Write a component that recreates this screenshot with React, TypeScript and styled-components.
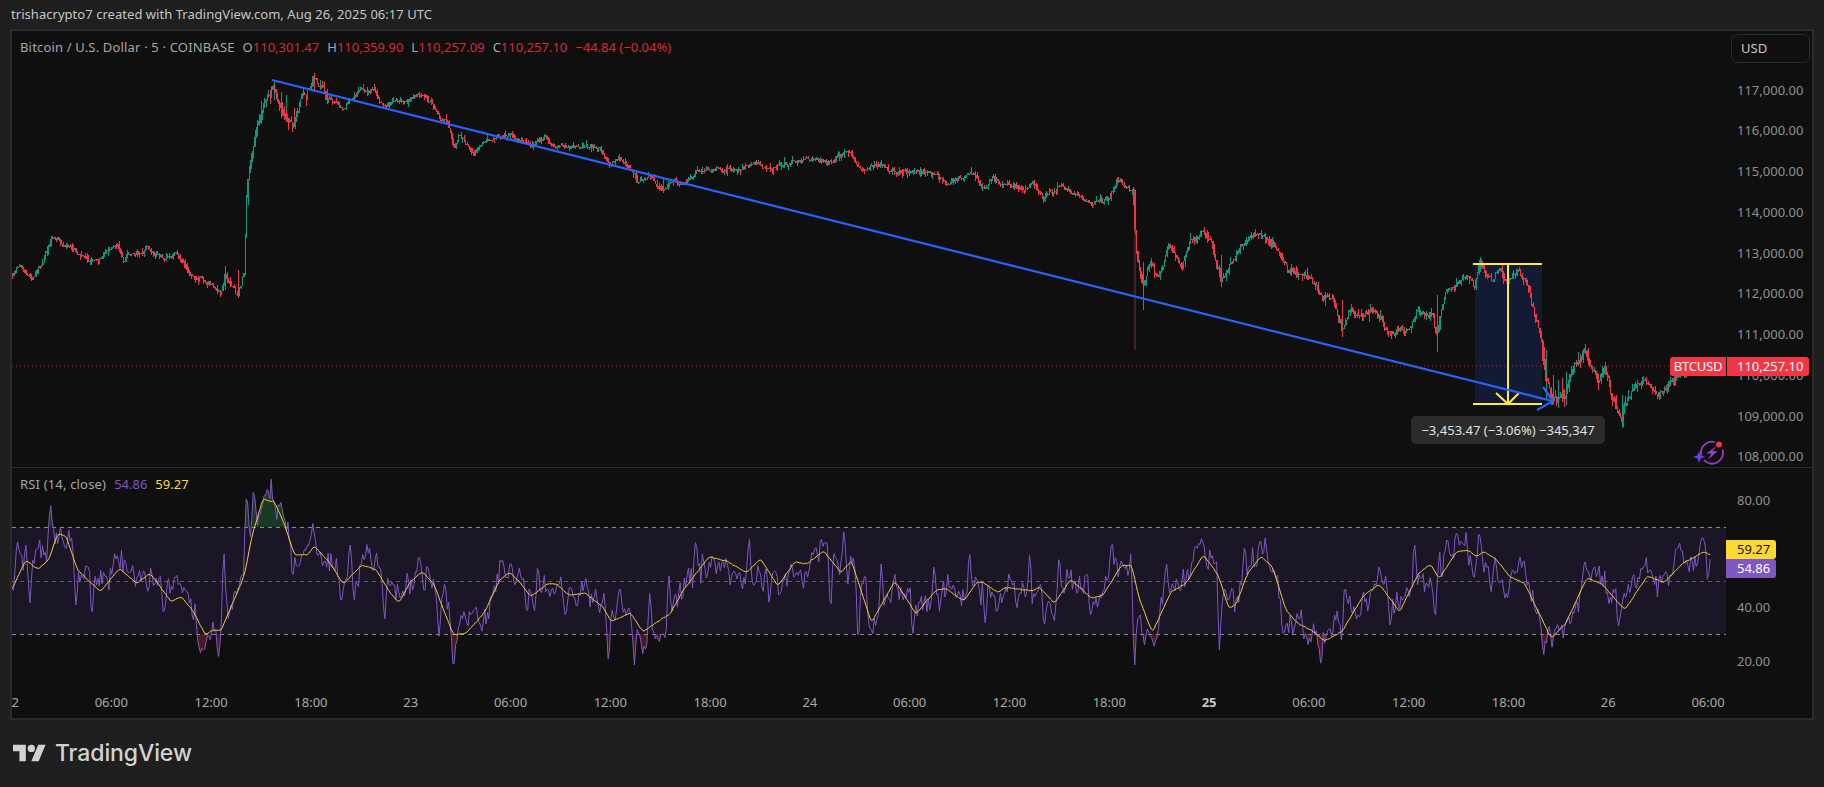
import React from "react";
import styled, { createGlobalStyle } from "styled-components";

type Pt = [number, number];

const rng = (seed: number) => () => {
  seed |= 0;
  seed = (seed + 0x6d2b79f5) | 0;
  let t = Math.imul(seed ^ (seed >>> 15), 1 | seed);
  t = (t + Math.imul(t ^ (t >>> 7), 61 | t)) ^ t;
  return ((t ^ (t >>> 14)) >>> 0) / 4294967296;
};

const interp = (pts: Pt[], x: number) => {
  if (x <= pts[0][0]) return pts[0][1];
  for (let i = 1; i < pts.length; i++) {
    if (x <= pts[i][0]) {
      const [x0, y0] = pts[i - 1];
      const [x1, y1] = pts[i];
      return y0 + ((y1 - y0) * (x - x0)) / (x1 - x0 || 1);
    }
  }
  return pts[pts.length - 1][1];
};

const PRICE: Pt[] = [
  [11, 275], [20, 265], [32, 280], [43, 262], [53, 236], [75, 250], [95, 263], [118, 243], [123, 259], [149, 246],
  [166, 261], [177, 253], [189, 273], [210, 283], [221, 296], [225, 272], [238, 295], [244, 270], [247, 190], [255, 135],
  [267, 95], [274, 90], [281, 112], [294, 125], [301, 99], [314, 78], [327, 97], [343, 107], [356, 91], [373, 90],
  [383, 107], [408, 97], [420, 94], [430, 100], [439, 118], [448, 124], [455, 150], [459, 134], [474, 153], [491, 137],
  [505, 134], [531, 145], [545, 139], [565, 147], [577, 145], [600, 150], [611, 164], [620, 156], [634, 172], [637, 181],
  [649, 175], [663, 190], [672, 179], [683, 185], [695, 171], [729, 170], [758, 163], [772, 171], [781, 164], [809, 159],
  [832, 163], [847, 150], [861, 172], [878, 164], [900, 172], [935, 173], [947, 182], [971, 174], [985, 189], [991, 179],
  [1024, 188], [1033, 183], [1044, 199], [1062, 183], [1077, 196], [1092, 202], [1109, 199], [1118, 182], [1133, 190], [1135, 228],
  [1137, 256], [1143, 285], [1150, 262], [1159, 277], [1168, 245], [1183, 267], [1189, 240], [1202, 231], [1212, 240], [1221, 280],
  [1236, 255], [1248, 236], [1259, 233], [1274, 247], [1283, 264], [1312, 281], [1324, 299], [1333, 296], [1342, 330], [1351, 309],
  [1362, 320], [1374, 307], [1389, 335], [1410, 329], [1416, 312], [1433, 315], [1437, 335], [1445, 295], [1457, 285], [1466, 277],
  [1475, 287], [1480, 263], [1492, 282], [1499, 267], [1507, 281], [1516, 273], [1525, 280], [1533, 309], [1539, 332], [1545, 372],
  [1551, 396], [1566, 396], [1572, 369], [1586, 354], [1598, 382], [1605, 368], [1610, 392], [1622, 418], [1631, 391], [1644, 379],
  [1660, 395], [1669, 381], [1687, 375],
];

const EXTRA_WICKS: [number, number, number, boolean][] = [
  [1143, 262, 310, false], [1221, 255, 287, false], [1437, 295, 352, true], [1342, 300, 337, false],
  [1566, 372, 405, true], [1622, 395, 428, true], [1546, 350, 400, true], [1480, 258, 272, true],
  [274, 80, 100, true], [314, 73, 92, false], [225, 266, 290, false], [238, 270, 298, false],
  [1135, 190, 232, false], [663, 178, 193, true], [1553, 375, 400, false], [1558, 380, 402, true],
  [281, 92, 118, false], [286, 95, 122, true], [294, 108, 127, false], [1562, 378, 402, false],
];

const volatility = (x: number) => {
  if (x > 1540 && x < 1640) return 2;
  if (x > 247 && x < 330) return 1.9;
  if (x > 1135) return 1.45;
  return 1.1;
};

const buildCandles = () => {
  const r = rng(77);
  const step = 1.3862;
  const paths = { upWick: "", downWick: "", upBody: "", downBody: "" };
  let prev = PRICE[0][1];
  let ar = 0;
  for (let x = 11; x < 1688; x += step) {
    const v = volatility(x);
    ar = ar * 0.6 + (r() - 0.5) * 3.8 * v;
    const close = interp(PRICE, x) + ar + (r() - 0.5) * 2.6 * v;
    const open = prev;
    const hi = Math.min(open, close);
    const lo = Math.max(open, close);
    const top = hi - r() * r() * 5 * v;
    const bottom = lo + r() * r() * 5 * v;
    const wick = `M${x.toFixed(1)} ${top.toFixed(1)}V${bottom.toFixed(1)}`;
    const body = `M${x.toFixed(1)} ${hi.toFixed(1)}V${Math.max(lo, hi + 1).toFixed(1)}`;
    if (close <= open) {
      paths.upWick += wick;
      paths.upBody += body;
    } else {
      paths.downWick += wick;
      paths.downBody += body;
    }
    prev = close;
  }
  EXTRA_WICKS.forEach(([x, a, b, isUp]) => {
    const seg = `M${x} ${a}V${b}`;
    if (isUp) paths.upWick += seg;
    else paths.downWick += seg;
  });
  return paths;
};

const CANDLES = buildCandles();

const zx3 = (zx: number) => zx / 1.742;
const zx4 = (zx: number) => 900 + zx / 1.697;
const zy = (v: number) => 460 + v / 3;

const YELLOW_LEFT: Pt[] = [
  [20, 390], [45, 300], [65, 328], [85, 300], [100, 222], [115, 228], [135, 330], [175, 395], [208, 325], [238, 370],
  [262, 340], [298, 425], [315, 410], [335, 450], [358, 525], [370, 510], [385, 512], [410, 410], [425, 350], [440, 220],
  [458, 118], [478, 125], [495, 190], [513, 285], [535, 285], [548, 258], [575, 310], [598, 372], [630, 315], [655, 328],
  [680, 400], [695, 428], [715, 365], [735, 335], [755, 370], [790, 525], [812, 520], [845, 455], [870, 360], [888, 337],
  [905, 365], [925, 410], [955, 370], [970, 372], [990, 405], [1020, 400], [1050, 440], [1065, 485], [1098, 458], [1120, 515],
  [1150, 480], [1168, 460], [1190, 392], [1235, 290], [1265, 303], [1300, 338], [1325, 297], [1355, 378], [1385, 305], [1405, 312],
  [1435, 273], [1465, 338], [1483, 302], [1518, 487], [1558, 365],
];
const YELLOW_RIGHT: Pt[] = [
  [0, 385], [27, 462], [60, 392], [78, 385], [108, 423], [130, 368], [140, 366], [165, 397], [180, 383], [225, 392],
  [237, 382], [262, 430], [290, 358], [325, 415], [345, 405], [375, 318], [393, 315], [405, 410], [428, 518], [460, 395],
  [485, 370], [515, 285], [540, 345], [558, 445], [570, 435], [590, 340], [612, 290], [632, 320], [655, 450], [675, 490],
  [700, 512], [720, 543], [750, 515], [785, 410], [813, 372], [848, 455], [880, 340], [900, 313], [915, 355], [945, 275],
  [965, 272], [978, 290], [990, 275], [1010, 295], [1035, 350], [1060, 370], [1105, 535], [1130, 490], [1165, 355], [1190, 370],
  [1230, 450], [1268, 348], [1297, 368], [1328, 310], [1365, 275], [1377, 288],
];
const YELLOW: Pt[] = [
  ...YELLOW_LEFT.map(([a, b]): Pt => [zx3(a), zy(b)]),
  ...YELLOW_RIGHT.map(([a, b]): Pt => [zx4(a), zy(b)]),
];

const SPIKES: Pt[] = [
  ...([
    [30, 245], [52, 430], [88, 135], [132, 435], [160, 465], [200, 280], [285, 465], [355, 570], [381, 590], [390, 280],
    [430, 100], [442, 90], [462, 105], [510, 350], [545, 190], [595, 420], [610, 255], [670, 480], [730, 288], [765, 530],
    [790, 625], [808, 455], [875, 300], [918, 460], [937, 315], [985, 465], [1060, 605], [1080, 380], [1105, 615], [1132, 400],
    [1148, 545], [1165, 345], [1212, 245], [1272, 375], [1305, 235], [1340, 430], [1430, 235], [1447, 445], [1470, 215], [1495, 545],
    [1535, 312],
  ] as Pt[]).map(([a, b]): Pt => [zx3(a), zy(b)]),
  ...([
    [22, 520], [58, 318], [118, 280], [145, 490], [220, 285], [245, 495], [270, 290], [323, 465], [360, 250], [398, 620],
    [415, 555], [452, 310], [507, 250], [542, 570], [585, 260], [610, 245], [650, 520], [714, 610], [750, 555], [755, 380],
    [832, 500], [873, 250], [908, 478], [928, 240], [983, 218], [1003, 395], [1040, 330], [1092, 585], [1162, 298], [1220, 500],
    [1262, 320], [1318, 265], [1362, 235], [1371, 372], [1377, 322],
  ] as Pt[]).map(([a, b]): Pt => [zx4(a), zy(b)]),
];

const buildRsi = () => {
  const r = rng(2024);
  const step = 1.3862;
  const xs: number[] = [];
  for (let x = 12; x <= 1711; x += step) xs.push(x);
  const raw = xs.map((x) => interp(YELLOW, x));
  const slow = raw.map((_, i) => {
    let s = 0;
    let n = 0;
    for (let k = -1; k <= 1; k++) {
      if (raw[i + k] !== undefined) {
        s += raw[i + k];
        n++;
      }
    }
    return s / n + (r() - 0.5) * 0.9;
  });
  let ar = 0;
  const fast = xs.map((x, i) => {
    ar = ar * 0.78 + (r() - 0.5) * 20;
    let y = slow[i] + Math.max(-28, Math.min(28, ar + (r() - 0.5) * 18));
    SPIKES.forEach(([sx, sy]) => {
      const w = Math.exp(-(((x - sx) / 2) ** 2));
      y += w * (sy - y);
    });
    return y;
  });
  const toLine = (ys: number[]) =>
    ys.map((y, i) => `${i ? "L" : "M"}${xs[i].toFixed(1)} ${y.toFixed(1)}`).join("");
  return {
    slow: toLine(slow),
    fast: toLine(fast),
    high: `${toLine(fast)}L${xs[xs.length - 1].toFixed(1)} 527L${xs[0].toFixed(1)} 527Z`,
    low: `${toLine(fast)}L${xs[xs.length - 1].toFixed(1)} 634L${xs[0].toFixed(1)} 634Z`,
  };
};

const RSI = buildRsi();

const GlobalStyle = createGlobalStyle`
  html, body { margin: 0; padding: 0; background: #1f1f1f; overflow: hidden; }
  #root { width: 1824px; height: 787px; }
`;

const Page = styled.div`
  width: 1824px;
  height: 787px;
  background: #1f1f1f;
  font-family: "Noto Sans", "Liberation Sans", sans-serif;
  font-size: 13px;
  display: flex;
  flex-direction: column;
`;

const Header = styled.div`
  height: 29px;
  padding: 0 0 2px 11px;
  box-sizing: border-box;
  display: flex;
  align-items: center;
  color: #c4c4c4;
  letter-spacing: 0.04px;
  white-space: nowrap;
`;

const Card = styled.div`
  margin-left: 10px;
  width: 1804px;
  height: 691px;
  box-sizing: border-box;
  border: 2px solid #2a2a2a;
  background: #0f0f0f;
  display: grid;
  grid-template-columns: 1714px 86px;
  grid-template-rows: 436px 1px 207px 43px;
`;

const Pane = styled.div`
  position: relative;
  overflow: hidden;
  min-width: 0;
`;

const ChartSvg = styled.svg`
  display: block;
  width: 1714px;
  height: 100%;
`;

const Rule = styled.div`
  grid-column: 1 / 3;
  background: #2a2a2a;
`;

const Legend = styled.div`
  position: absolute;
  left: 8px;
  top: 7px;
  display: flex;
  gap: 8px;
  color: #a6a6a6;
  white-space: nowrap;
  line-height: 18px;
`;

const LegendTitle = styled.span`
  letter-spacing: 0.17px;
`;

const Reading = styled.span<{ $color: string }>`
  color: ${(p) => p.$color};
`;

const PriceAxis = styled.div`
  position: relative;
  padding: 38.6px 0 0 11px;
  color: #8f8f8f;
`;

const RsiAxis = styled.div`
  position: relative;
  padding: 6px 0 0 11px;
  color: #8f8f8f;
`;

const Tick = styled.div<{ $h: number }>`
  height: ${(p) => p.$h}px;
  line-height: ${(p) => p.$h}px;
`;

const UsdButton = styled.div`
  position: absolute;
  left: 5px;
  top: 3px;
  width: 79px;
  height: 29px;
  box-sizing: border-box;
  border: 1px solid #2a2a2a;
  border-radius: 6px;
  padding-left: 9px;
  line-height: 27px;
  color: #c8c8c8;
  background: #0f0f0f;
`;

const LastSymbol = styled.div`
  position: absolute;
  right: 0;
  top: 326px;
  width: 56px;
  height: 19px;
  border-radius: 3px 0 0 3px;
  background: #f23645;
  color: #fff;
  line-height: 19px;
  text-align: center;
  letter-spacing: -0.2px;
`;

const LastPrice = styled.div`
  position: absolute;
  left: 1px;
  top: 326px;
  width: 82px;
  height: 19px;
  border-radius: 0 3px 3px 0;
  background: #f23645;
  color: #fff;
  line-height: 19px;
  padding-left: 10px;
  box-sizing: border-box;
`;

const SeriesTag = styled.div<{ $bg: string; $fg: string; $top: number; $h: number }>`
  position: absolute;
  left: 0;
  top: ${(p) => p.$top}px;
  width: 50px;
  height: ${(p) => p.$h}px;
  box-sizing: border-box;
  padding-left: 11px;
  line-height: ${(p) => p.$h}px;
  background: ${(p) => p.$bg};
  color: ${(p) => p.$fg};
  border-radius: 0 3px 3px 0;
`;

const Measure = styled.div`
  position: absolute;
  left: 1399px;
  top: 385px;
  width: 194px;
  height: 28px;
  border-radius: 5px;
  background: #2b2b2b;
  color: #e0e0e0;
  line-height: 28px;
  text-align: center;
  white-space: nowrap;
`;

const TimeAxis = styled.div`
  overflow: hidden;
  color: #a9a9a9;
`;

const TimeRow = styled.div`
  display: grid;
  grid-template-columns: repeat(18, 99.8px);
  margin-left: -50.4px;
  height: 100%;
  align-items: start;
  padding-top: 18px;
`;

const TimeLabel = styled.span<{ $strong?: boolean }>`
  text-align: center;
  line-height: 18px;
  font-weight: ${(p) => (p.$strong ? 700 : 400)};
  color: ${(p) => (p.$strong ? "#c8c8c8" : "inherit")};
`;

const Corner = styled.div``;

const Footer = styled.div`
  flex: 1;
  display: flex;
  align-items: center;
  gap: 9px;
  padding: 0 0 1px 13px;
`;

const LogoMark = styled.svg`
  width: 33px;
  height: 18px;
  fill: #d2d2d2;
`;

const Wordmark = styled.span`
  font-family: Inter, "Noto Sans", sans-serif;
  font-size: 23px;
  font-weight: 500;
  letter-spacing: -0.1px;
  color: #d2d2d2;
`;

const PRICE_TICKS = ["117,000.00", "116,000.00", "115,000.00", "114,000.00", "113,000.00", "112,000.00", "111,000.00", "110,000.00", "109,000.00", "108,000.00"];
const RSI_TICKS = ["80.00", "", "40.00", "20.00"];
const TIMES = ["22", "06:00", "12:00", "18:00", "23", "06:00", "12:00", "18:00", "24", "06:00", "12:00", "18:00", "25", "06:00", "12:00", "18:00", "26", "06:00"];

const OHLC: [string, string][] = [
  ["O", "110,301.47"],
  ["H", "110,359.90"],
  ["L", "110,257.09"],
  ["C", "110,257.10"],
];

const RED = "#d42a38";

const BoostBadge = () => (
  <g fill="none">
    <path d="M1701.5 455.5A11 11 0 0 1 1715 442M1722.6 449.5A11 11 0 0 1 1704 460.2" stroke="#9c3cc4" strokeWidth="1.8" />
    <path d="M1717 445.5L1706.5 453.5H1711.5L1707.5 460L1717.5 451.2H1712.5Z" fill="#a23ccb" />
    <path d="M1699 451L1700.6 455.4L1705.2 457L1700.6 458.6L1699 463L1697.4 458.6L1692.8 457L1697.4 455.4Z" fill="#6d3ff0" />
    <circle cx="1719" cy="444.5" r="3" fill="#f23645" />
  </g>
);

const MainChart = () => (
  <ChartSvg viewBox="12 31 1714 436" preserveAspectRatio="none">
    <rect x="1475" y="263" width="67" height="141" fill="#131b34" />
    <line x1="12" x2="1670" y1="366" y2="366" stroke="#f23645" strokeWidth="1" strokeDasharray="1 3" opacity="0.65" />
    <g fill="none" shapeRendering="crispEdges">
      <path d={CANDLES.upWick} stroke="#089981" strokeWidth="1" />
      <path d={CANDLES.downWick} stroke="#f23645" strokeWidth="1" />
      <path d={CANDLES.upBody} stroke="#089981" strokeWidth="1.5" />
      <path d={CANDLES.downBody} stroke="#f23645" strokeWidth="1.5" />
    </g>
    <path d="M1135 228V350" stroke="#6b3a40" strokeWidth="1" fill="none" />
    <path d="M1473 264H1542M1473 404H1542M1508 264V404" stroke="#ffeb3b" strokeWidth="2" fill="none" />
    <path d="M1496 393L1508 404L1519 393" stroke="#ffeb3b" strokeWidth="2" fill="none" />
    <path d="M272 80L1552 401" stroke="#2962ff" strokeWidth="2.2" fill="none" />
    <path d="M1543 387L1553 401L1537 410" stroke="#2962ff" strokeWidth="2.2" fill="none" />
    <BoostBadge />
  </ChartSvg>
);

const RsiChart = () => (
  <ChartSvg viewBox="12 468 1714 207" preserveAspectRatio="none">
    <defs>
      <clipPath id="above">
        <rect x="12" y="468" width="1714" height="59" />
      </clipPath>
      <clipPath id="below">
        <rect x="12" y="634" width="1714" height="41" />
      </clipPath>
    </defs>
    <rect x="12" y="527" width="1714" height="107" fill="#1a1625" />
    <path d={RSI.high} fill="#1b3a24" clipPath="url(#above)" />
    <path d={RSI.low} fill="#4a1a24" clipPath="url(#below)" />
    <line x1="12" x2="1726" y1="527.5" y2="527.5" stroke="#8a8a90" strokeDasharray="4 4" />
    <line x1="12" x2="1726" y1="581.5" y2="581.5" stroke="#5c5c62" strokeDasharray="4 4" />
    <line x1="12" x2="1726" y1="634.5" y2="634.5" stroke="#8a8a90" strokeDasharray="4 4" />
    <path d={RSI.fast} stroke="#7e57c2" strokeWidth="1" fill="none" />
    <path d={RSI.slow} stroke="#f5cf2d" strokeWidth="1" fill="none" />
  </ChartSvg>
);

export default function App() {
  return (
    <Page>
      <GlobalStyle />
      <Header>trishacrypto7 created with TradingView.com, Aug 26, 2025 06:17 UTC</Header>
      <Card>
        <Pane>
          <MainChart />
          <Legend>
            <LegendTitle>Bitcoin / U.S. Dollar · 5 · COINBASE</LegendTitle>
            {OHLC.map(([k, v]) => (
              <span key={k}>
                {k}
                <Reading $color={RED}>{v}</Reading>
              </span>
            ))}
            <Reading $color={RED}>−44.84 (−0.04%)</Reading>
          </Legend>
          <LastSymbol>BTCUSD</LastSymbol>
          <Measure>−3,453.47 (−3.06%) −345,347</Measure>
        </Pane>
        <PriceAxis>
          {PRICE_TICKS.map((t) => (
            <Tick key={t} $h={40.78}>{t}</Tick>
          ))}
          <UsdButton>USD</UsdButton>
          <LastPrice>110,257.10</LastPrice>
        </PriceAxis>
        <Rule />
        <Pane>
          <RsiChart />
          <Legend>
            <LegendTitle>RSI (14, close)</LegendTitle>
            <Reading $color="#7e57c2">54.86</Reading>
            <Reading $color="#fdd835">59.27</Reading>
          </Legend>
        </Pane>
        <RsiAxis>
          {RSI_TICKS.map((t, i) => (
            <Tick key={i} $h={53.6}>{t}</Tick>
          ))}
          <SeriesTag $bg="#fdd835" $fg="#131722" $top={72} $h={19}>59.27</SeriesTag>
          <SeriesTag $bg="#7e57c2" $fg="#ffffff" $top={91} $h={19}>54.86</SeriesTag>
        </RsiAxis>
        <TimeAxis>
          <TimeRow>
            {TIMES.map((t, i) => (
              <TimeLabel key={i} $strong={t === "25"}>{t}</TimeLabel>
            ))}
          </TimeRow>
        </TimeAxis>
        <Corner />
      </Card>
      <Footer>
        <LogoMark viewBox="0 4 36 18">
          <path d="M14 22H7V11H0V4h14v18zM28 22h-8l7.5-18h8L28 22z" />
          <circle cx="20" cy="8" r="4" />
        </LogoMark>
        <Wordmark>TradingView</Wordmark>
      </Footer>
    </Page>
  );
}
